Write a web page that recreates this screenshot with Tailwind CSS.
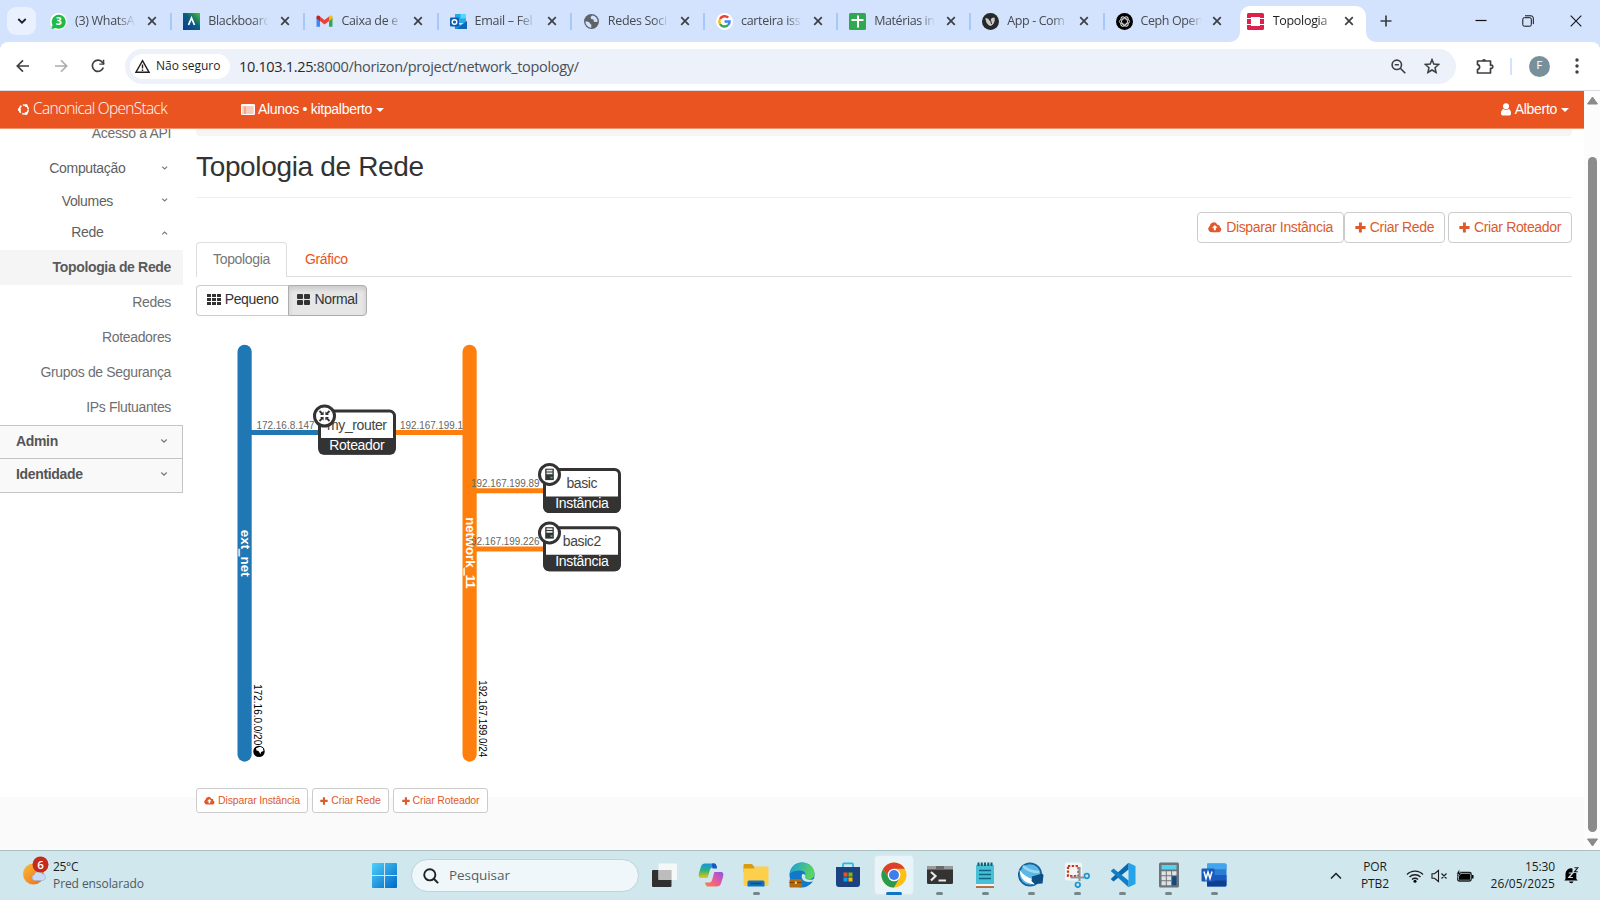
<!DOCTYPE html>
<html lang="pt-BR">
<head>
<meta charset="utf-8">
<title>Topologia de Rede</title>
<script src="https://cdn.jsdelivr.net/npm/@tailwindcss/browser@4"></script>
</head>
<body class="w-[1600px] h-[900px] overflow-hidden bg-white font-['Liberation_Sans',Arial,sans-serif]">
<svg class="hidden">
  <symbol id="x" viewBox="0 0 10 10"><path d="M1.200 1.200l7.600 7.600M8.800 1.200L1.200 8.800" stroke="#3c4043" stroke-width="1.700" fill="none"/></symbol>
  <symbol id="plus" viewBox="0 0 12 12"><path d="M4.300 0.500h3.200v3.800h4v3.200h-4v4H4.300v-4H.4V4.300h3.900z" fill="currentColor"/></symbol>
  <symbol id="cloud" viewBox="0 0 15 12"><path d="M3.600 11.500A3.500 3.500 0 0 1 2 5 4.200 4.200 0 0 1 10 3.500a2.300 2.300 0 0 1 2.600 2.600 2.900 2.900 0 0 1-.6 5.400z" fill="currentColor"/><path d="M7.300 3.800l3 3.100H8.400v2.700H6.200V6.900H4.300z" fill="#fff"/></symbol>
  <symbol id="down" viewBox="0 0 8 6"><path d="M1.300 1.500L4 4.100l2.700-2.600" stroke="#777" stroke-width="1.200" fill="none"/></symbol>
</svg>
<div class="flex h-[900px] w-[1600px] flex-col">

  <!-- Tab strip -->
  <div class="flex h-[42px] shrink-0 bg-[#d3e2fd] font-['Open_Sans','Noto_Sans',sans-serif] text-[12.500px] tracking-[-0.300px] text-[#474b50]">
    <div class="mt-[7px] ml-[7px] flex h-[28px] w-[29px] items-center justify-center rounded-[9px] bg-[#e9f1fe]"><svg class="size-[10px]" viewBox="0 0 10 10"><path d="M1.300 3l3.700 3.700L8.700 3" stroke="#1f1f1f" stroke-width="1.800" fill="none"/></svg></div>
    <div class="ml-[3px] flex h-[42px]">
      <div class="flex w-[133.200px] items-center pl-[11px]">
        <svg class="size-[17px] shrink-0" viewBox="0 0 17 17"><circle cx="8.500" cy="8.500" r="8.500" fill="#fff"/><path d="M1.500 16l1-4a7 7 0 1 1 3 3z" fill="#1fba4a"/><text x="8.500" y="12.200" font-size="10.500" font-weight="700" fill="#fff" text-anchor="middle">3</text></svg>
        <span class="ml-[8px] w-[61px] overflow-hidden whitespace-nowrap [mask-image:linear-gradient(90deg,#000_70%,transparent)]">(3) WhatsA</span>
        <svg class="ml-[11px] size-[10px] shrink-0"><use href="#x"/></svg><i class="ml-auto h-[17px] w-[2px] bg-[#a8c7fa]"></i>
      </div>
      <div class="flex w-[133.200px] items-center pl-[11px]">
        <svg class="size-[17px] shrink-0" viewBox="0 0 17 17"><defs><linearGradient id="bb" x1="0" y1="1" x2="1" y2="0"><stop offset="0" stop-color="#0b3a9a"/><stop offset=".55" stop-color="#08607e"/><stop offset="1" stop-color="#4fc322"/></linearGradient></defs><rect width="17" height="17" fill="url(#bb)"/><path d="M5.500 12L8.500 5l3 7" stroke="#fff" stroke-width="1.800" fill="none"/></svg>
        <span class="ml-[8px] w-[61px] overflow-hidden whitespace-nowrap [mask-image:linear-gradient(90deg,#000_75%,transparent)]">Blackboard</span>
        <svg class="ml-[11px] size-[10px] shrink-0"><use href="#x"/></svg><i class="ml-auto h-[17px] w-[2px] bg-[#a8c7fa]"></i>
      </div>
      <div class="flex w-[133.200px] items-center pl-[11px]">
        <svg class="size-[17px] shrink-0" viewBox="0 0 17 17"><path d="M.5 4v9.800h3.500V7z" fill="#4285f4"/><path d="M13 7v6.800h3.500V4z" fill="#34a853"/><path d="M4 3.500v4.600l4.500 3.400 4.500-3.400V3.500L8.500 7z" fill="#ea4335"/><path d="M.5 5.500V4C.5 2.300 2.600 1.800 4 3.300v4.800z" fill="#c5221f"/><path d="M16.500 5.500V4c0-1.700-2.100-2.200-3.500-.7v4.800z" fill="#fbbc04"/></svg>
        <span class="ml-[8px] w-[61px] overflow-hidden whitespace-nowrap [mask-image:linear-gradient(90deg,#000_75%,transparent)]">Caixa de e</span>
        <svg class="ml-[11px] size-[10px] shrink-0"><use href="#x"/></svg><i class="ml-auto h-[17px] w-[2px] bg-[#a8c7fa]"></i>
      </div>
      <div class="flex w-[133.200px] items-center pl-[11px]">
        <svg class="size-[17px] shrink-0" viewBox="0 0 17 17"><rect x="5" y="1" width="11" height="9" fill="#28a8ea"/><rect x="10.500" y="1" width="5.500" height="4.500" fill="#50d9ff"/><path d="M4 8.500l6.500 3.500L17 8v8H5z" fill="#1490df"/><path d="M17 8L7 16h10z" fill="#0f64b5"/><rect y="4.500" width="9" height="9" rx="1" fill="#0a5fb4"/><circle cx="4.500" cy="9" r="2.300" fill="none" stroke="#fff" stroke-width="1.400"/></svg>
        <span class="ml-[8px] w-[61px] overflow-hidden whitespace-nowrap [mask-image:linear-gradient(90deg,#000_70%,transparent)]">Email – Fel</span>
        <svg class="ml-[11px] size-[10px] shrink-0"><use href="#x"/></svg><i class="ml-auto h-[17px] w-[2px] bg-[#a8c7fa]"></i>
      </div>
      <div class="flex w-[133.200px] items-center pl-[11px]">
        <svg class="size-[17px] shrink-0" viewBox="0 0 17 17"><circle cx="8.500" cy="8.500" r="7.500" fill="#5f6368"/><path d="M2.300 8.500c2 .2 4 0 4.500 1.600s1.500 1 1.500 2.200v2.500a6.500 6.500 0 0 1-6-6.300zM9 2.500L7.500 4.300l.8 1.700 2.300.5.200 2.300 3.700.2A6 6 0 0 0 9 2.500z" fill="#d3e2fd"/></svg>
        <span class="ml-[8px] w-[61px] overflow-hidden whitespace-nowrap [mask-image:linear-gradient(90deg,#000_75%,transparent)]">Redes Soci</span>
        <svg class="ml-[11px] size-[10px] shrink-0"><use href="#x"/></svg><i class="ml-auto h-[17px] w-[2px] bg-[#a8c7fa]"></i>
      </div>
      <div class="flex w-[133.200px] items-center pl-[11px]">
        <svg class="size-[17px] shrink-0" viewBox="0 0 17 17"><circle cx="8.500" cy="8.500" r="8.500" fill="#fff"/><g fill="none" stroke-width="2.400"><path d="M12.200 4.700A5.200 5.200 0 0 0 4 6" stroke="#ea4335"/><path d="M4 6a5.200 5.200 0 0 0 0 5" stroke="#fbbc04"/><path d="M4 11a5.200 5.200 0 0 0 8 1.200" stroke="#34a853"/><path d="M12 12.200a5.200 5.200 0 0 0 1.600-3.700H8.500" stroke="#4285f4"/></g></svg>
        <span class="ml-[8px] w-[61px] overflow-hidden whitespace-nowrap [mask-image:linear-gradient(90deg,#000_75%,transparent)]">carteira iss</span>
        <svg class="ml-[11px] size-[10px] shrink-0"><use href="#x"/></svg><i class="ml-auto h-[17px] w-[2px] bg-[#a8c7fa]"></i>
      </div>
      <div class="flex w-[133.200px] items-center pl-[11px]">
        <svg class="size-[17px] shrink-0" viewBox="0 0 17 17"><rect width="17" height="17" rx="1.500" fill="#2fa84f"/><path d="M9 2.500v12M2.500 7h12" stroke="#fff" stroke-width="2"/></svg>
        <span class="ml-[8px] w-[61px] overflow-hidden tracking-[-0.400px] whitespace-nowrap [mask-image:linear-gradient(90deg,#000_75%,transparent)]">Matérias in</span>
        <svg class="ml-[11px] size-[10px] shrink-0"><use href="#x"/></svg><i class="ml-auto h-[17px] w-[2px] bg-[#a8c7fa]"></i>
      </div>
      <div class="flex w-[133.200px] items-center pl-[11px]">
        <svg class="size-[17px] shrink-0" viewBox="0 0 17 17"><circle cx="8.500" cy="8.500" r="8.500" fill="#26282a"/><path d="M3.500 5c2 0 3.500 1.200 4.300 3.200C8.800 6 9.500 4.500 12.500 4.500c1 4-1 7.500-4 8.500-3-1-5-4-5-8z" fill="#c9c9c9"/><path d="M8 5l1.500 6" stroke="#26282a"/></svg>
        <span class="ml-[8px] w-[61px] overflow-hidden tracking-[-0.400px] whitespace-nowrap [mask-image:linear-gradient(90deg,#000_75%,transparent)]">App - Com</span>
        <svg class="ml-[11px] size-[10px] shrink-0"><use href="#x"/></svg><i class="ml-auto h-[17px] w-[2px] bg-[#a8c7fa]"></i>
      </div>
      <div class="flex w-[133.200px] items-center pl-[11px]">
        <svg class="size-[17px] shrink-0" viewBox="0 0 17 17"><circle cx="8.500" cy="8.500" r="8.500" fill="#000"/><g fill="none" stroke="#ddd" stroke-width=".9"><ellipse cx="8.500" cy="8.500" rx="5.200" ry="2.800"/><ellipse cx="8.500" cy="8.500" rx="5.200" ry="2.800" transform="rotate(60 8.500 8.500)"/><ellipse cx="8.500" cy="8.500" rx="5.200" ry="2.800" transform="rotate(120 8.500 8.500)"/></g></svg>
        <span class="ml-[8px] w-[61px] overflow-hidden tracking-[-0.400px] whitespace-nowrap [mask-image:linear-gradient(90deg,#000_75%,transparent)]">Ceph Open</span>
        <svg class="ml-[10px] size-[10px] shrink-0"><use href="#x"/></svg>
      </div>
    </div>
    <div class="relative mt-[6px] ml-[2px] flex h-[36px] w-[126px] items-center rounded-t-[10px] bg-white pb-[6px] pl-[7px] text-[#1f1f1f]">
      <svg class="absolute bottom-0 -left-[10px] size-[10px]" viewBox="0 0 10 10"><path d="M10 0v10H0A10 10 0 0 0 10 0z" fill="#fff"/></svg>
      <svg class="absolute -right-[10px] bottom-0 size-[10px]" viewBox="0 0 10 10"><path d="M0 0v10h10A10 10 0 0 1 0 0z" fill="#fff"/></svg>
      <svg class="size-[17px] shrink-0" viewBox="0 0 17 17"><path d="M0 5V1.500Q0 0 1.500 0h14Q17 0 17 1.500V5h-4V4H4v1zM0 12v3.500Q0 17 1.500 17h14q1.500 0 1.500-1.500V12h-4v1H4v-1zM0 6h4v5H0zM13 6h4v5h-4z" fill="#e01f4d"/></svg>
      <span class="ml-[9px] w-[59px] overflow-hidden whitespace-nowrap [mask-image:linear-gradient(90deg,#000_75%,rgba(0,0,0,.3))]">Topologia</span>
      <svg class="ml-[12px] size-[10px]"><use href="#x"/></svg>
    </div>
    <div class="flex flex-1 items-center text-[#333]">
      <svg class="ml-[14px] size-[12px]" viewBox="0 0 12 12"><path d="M6 .5v11M.5 6h11" stroke="#3c4043" stroke-width="1.700"/></svg>
      <svg class="ml-[83px] size-[12px]" viewBox="0 0 12 12"><path d="M.5 5.500h11" stroke="#111" stroke-width="1.200"/></svg>
      <svg class="ml-[35px] size-[12px]" viewBox="0 0 12 12"><rect x=".8" y="2.700" width="8.500" height="8.500" rx="1.500" fill="none" stroke="#111"/><path d="M3 .8h6q2.300 0 2.300 2.300v6" fill="none" stroke="#111"/></svg>
      <svg class="ml-[36px] size-[12px]" viewBox="0 0 12 12"><path d="M.7.7l10.600 10.600M11.300.7L.7 11.300" stroke="#111" stroke-width="1.100"/></svg>
    </div>
  </div>

  <!-- Address bar -->
  <div class="h-[49px] shrink-0 bg-[#d3e2fd] font-['Open_Sans','Noto_Sans',sans-serif]">
    <div class="flex h-full items-center rounded-t-[8px] border-b border-[#d9dce0] bg-white">
      <svg class="ml-[16px] size-[14px]" viewBox="0 0 14 14"><path d="M13 7H1.500M7 1.300L1.300 7 7 12.700" stroke="#3c4043" stroke-width="1.700" fill="none"/></svg>
      <svg class="ml-[24px] size-[14px]" viewBox="0 0 14 14"><path d="M1 7h11.500M7 1.300L12.700 7 7 12.700" stroke="#a9abae" stroke-width="1.600" fill="none"/></svg>
      <svg class="ml-[23px] size-[14px]" viewBox="0 0 14 14"><path d="M12.300 8.500A5.600 5.600 0 1 1 11.500 3.500L13 5" stroke="#3c4043" stroke-width="1.700" fill="none"/><path d="M13.300.8v5H8.300V4.500h3.500V.8z" fill="#3c4043"/></svg>
      <div class="ml-[20px] flex h-[35px] w-[1331px] items-center rounded-full bg-[#ecf1fa]">
        <div class="ml-[5px] flex h-[25px] w-[100px] items-center rounded-full bg-white">
          <svg class="ml-[5px] size-[15px]" viewBox="0 0 15 15"><path d="M7.500 1.700L14 13.200H1z" stroke="#1f1f1f" stroke-width="1.400" fill="none"/><path d="M7.500 5.500v4M7.500 10.500v1.400" stroke="#1f1f1f" stroke-width="1.400"/></svg>
          <span class="ml-[6px] text-[12px] font-medium tracking-[0px] whitespace-nowrap text-[#1f1f1f]">Não seguro</span>
        </div>
        <span class="mt-[2px] ml-[9px] w-[350px] text-[14.500px] tracking-[-0.330px] whitespace-nowrap text-[#4a4e53]"><b class="font-normal text-[#26282b]">10.103.1.25:</b>8000/horizon/project/network_topology/</span>
        <svg class="ml-auto size-[15px]" viewBox="0 0 15 15"><circle cx="5.800" cy="5.800" r="4.700" stroke="#3c4043" stroke-width="1.600" fill="none"/><path d="M9.300 9.300l5 5M3.700 5.800h4.200" stroke="#3c4043" stroke-width="1.600"/></svg>
        <svg class="mr-[16px] ml-[18px] size-[16px]" viewBox="0 0 16 16"><path d="M8 1.600l1.800 4.500 4.900.4-3.700 3.200 1.100 4.800L8 12l-4.100 2.500L5 9.700 1.300 6.500l4.900-.4z" stroke="#3c4043" stroke-width="1.500" fill="none"/></svg>
      </div>
      <svg class="ml-[20px] size-[18px]" viewBox="0 0 18 18"><path d="M1.500 4h13v4.200h.7a1.600 1.600 0 0 1 0 3.200h-.7V16h-13v-3.500c2.800-.3 2.800-4.500 0-4.800z" stroke="#3c4043" stroke-width="1.700" fill="none" stroke-linejoin="round"/><path d="M6 4a2 2 0 0 1 4 0z" fill="#3c4043"/></svg>
      <i class="ml-[16px] h-[17px] w-[2px] bg-[#d3e2fd]"></i>
      <div class="ml-[17px] flex size-[21px] items-center justify-center rounded-full bg-[#78909c] font-['Roboto'] text-[11px] text-white">F</div>
      <svg class="ml-[19px] h-[16px] w-[16px]" viewBox="0 0 16 16" fill="#3c4043"><circle cx="8" cy="2" r="1.700"/><circle cx="8" cy="8" r="1.700"/><circle cx="8" cy="14" r="1.700"/></svg>
    </div>
  </div>

  <!-- Page viewport -->
  <div class="flex h-[759px] shrink-0">
    <div class="flex w-[1584px] flex-col">
      <header class="flex h-[38px] shrink-0 items-center border-b border-[#f0936f] bg-[#e95420] text-[14px] tracking-[-0.300px] text-white">
        <svg class="ml-[17px] size-[13px]" viewBox="0 0 12 12"><circle cx="6.300" cy="6" r="4.100" fill="none" stroke="#fff" stroke-width="1.500" stroke-dasharray="7.200 1.390" stroke-dashoffset="-.7"/><g fill="#fff"><circle cx="2.200" cy="6" r="1.400"/><circle cx="8.400" cy="2.300" r="1.400"/><circle cx="8.400" cy="9.700" r="1.400"/></g></svg>
        <span class="ml-[3px] w-[136px] pb-[2px] font-['Open_Sans','Noto_Sans',sans-serif] text-[15.500px] font-light tracking-[-0.700px] whitespace-nowrap">Canonical OpenStack</span>
        <svg class="ml-[72px] h-[11px] w-[14px]" viewBox="0 0 14 11"><rect width="14" height="11" rx="1.300" fill="#fff"/><path d="M1.300 3h11.400M1.300 5h11.400M1.300 7h11.400M1.300 9h11.400M4 2.500v7.500" stroke="#e95420" stroke-width=".6"/></svg>
        <span class="ml-[3px] whitespace-nowrap">Alunos • kitpalberto</span>
        <i class="ml-[4px] border-x-4 border-t-4 border-x-transparent border-t-white"></i>
        <svg class="ml-auto h-[13px] w-[10px]" viewBox="0 0 10 13" fill="#fff"><circle cx="5" cy="3.300" r="3"/><path d="M0 10.500C0 7.500 1.500 6 2.500 6a4 4 0 0 0 5 0C8.500 6 10 7.500 10 10.500c0 1.500-1 2-2 2H2c-1 0-2-.5-2-2z"/></svg>
        <span class="ml-[4px]">Alberto</span>
        <i class="mr-[15px] ml-[4px] border-x-4 border-t-4 border-x-transparent border-t-white"></i>
      </header>
      <div class="flex h-[721px] overflow-hidden bg-[linear-gradient(#fff_668px,#fafafa_668px)] text-[14px] tracking-[-0.340px] text-[#6f6f6f]">
        <nav class="w-[183px] shrink-0">
          <div class="-mt-[12px] flex h-[33px] items-center justify-end pr-[12px]">Acesso à API</div>
          <div class="mt-[2px] flex h-[33px] items-center pr-[15px]"><span class="w-[174px] pl-[14px] text-center text-[#5f5f5f]">Computação</span><svg class="-mt-[2px] h-[6px] w-[8px]"><use href="#down"/></svg></div>
          <div class="flex h-[32px] items-center pr-[15px]"><span class="w-[174px] pl-[14px] text-center text-[#5f5f5f]">Volumes</span><svg class="-mt-[2px] h-[6px] w-[8px]"><use href="#down"/></svg></div>
          <div class="flex h-[33px] items-center pr-[15px] pb-[2px]"><span class="w-[174px] pl-[14px] text-center text-[#5f5f5f]">Rede</span><svg class="h-[6px] w-[8px] rotate-180"><use href="#down"/></svg></div>
          <div class="flex h-[35px] items-center justify-end bg-[#f5f5f5] pr-[12px] pb-px font-bold text-[#5a5a5a]">Topologia de Rede</div>
          <div class="flex h-[35px] items-center justify-end pr-[12px] pb-px">Redes</div>
          <div class="flex h-[35px] items-center justify-end pr-[12px] pb-px">Roteadores</div>
          <div class="flex h-[35px] items-center justify-end pr-[12px] pb-px">Grupos de Segurança</div>
          <div class="flex h-[35px] items-center justify-end pr-[12px] pb-px">IPs Flutuantes</div>
          <div class="border-t border-r border-b border-[#c4c4c4] bg-[#f9f9f9] font-bold text-[#555]">
            <div class="flex h-[33px] items-center justify-between border-b border-[#c4c4c4] pr-[14px] pb-px pl-[16px]">Admin<svg class="-mt-[2px] h-[6px] w-[8px]"><use href="#down"/></svg></div>
            <div class="flex h-[33px] items-center justify-between pr-[14px] pb-[2px] pl-[16px]">Identidade<svg class="-mt-[2px] h-[6px] w-[8px]"><use href="#down"/></svg></div>
          </div>
        </nav>
        <main class="ml-[13px] flex w-[1376px] flex-col">
          <div class="h-[7px] shrink-0 rounded-b bg-[#f5f5f5]"></div>
          <h1 class="flex h-[62px] shrink-0 items-center border-b border-[#eee] text-[28px] tracking-[-0.340px] text-[#333]">Topologia de Rede</h1>
          <div class="mt-[14px] flex h-[31px] shrink-0 justify-end text-[#dd5a2c]">
            <div class="flex w-[147px] items-center justify-center gap-[4px] rounded-[4px] border border-[#ccc] bg-white pb-px whitespace-nowrap"><svg class="h-[12px] w-[14px]"><use href="#cloud"/></svg>Disparar Instância</div>
            <div class="flex w-[101px] items-center justify-center gap-[4px] rounded-[4px] border border-[#ccc] bg-white pb-px whitespace-nowrap"><svg class="size-[11px]"><use href="#plus"/></svg>Criar Rede</div>
            <div class="ml-[3px] flex w-[124px] items-center justify-center gap-[4px] rounded-[4px] border border-[#ccc] bg-white pb-px whitespace-nowrap"><svg class="size-[11px]"><use href="#plus"/></svg>Criar Roteador</div>
          </div>
          <div class="-mt-px flex h-[35px] shrink-0 items-stretch border-b border-[#ddd]">
            <div class="-mb-px flex w-[91px] items-center justify-center rounded-t-[4px] border border-b-0 border-[#ddd] bg-white pb-[2px] text-[#777]">Topologia</div>
            <div class="ml-[18px] flex items-center text-[#e95420]">Gráfico</div>
          </div>
          <div class="mt-[8px] flex h-[31px] shrink-0 text-[#333]">
            <div class="flex w-[92px] items-center justify-center gap-[4px] rounded-l-[4px] border border-r-0 border-[#ccc] bg-white pb-[2px]"><svg class="h-[11px] w-[14px]" viewBox="0 0 14 11" fill="#333"><path d="M0 0h4v3H0zM5 0h4v3H5zM10 0h4v3h-4zM0 4h4v3H0zM5 4h4v3H5zM10 4h4v3h-4zM0 8h4v3H0zM5 8h4v3H5zM10 8h4v3h-4z"/></svg>Pequeno</div>
            <div class="flex w-[79px] items-center justify-center gap-[4px] rounded-r-[4px] border border-[#adadad] bg-[#e6e6e6] pb-[2px] shadow-[inset_0_3px_5px_rgba(0,0,0,.125)]"><svg class="h-[11px] w-[13px]" viewBox="0 0 13 11" fill="#333"><rect width="6" height="5" rx="1"/><rect x="7" width="6" height="5" rx="1"/><rect y="6" width="6" height="5" rx="1"/><rect x="7" y="6" width="6" height="5" rx="1"/></svg>Normal</div>
          </div>
          <svg class="h-[471px] w-[1376px] shrink-0 tracking-normal" viewBox="196 316.300 1376 471">
            <g stroke-width="5"><path d="M250 432.700h70" stroke="#1f77b4"/><path d="M395 432.700h70M475 491h70M475 549.300h70" stroke="#ff7f0e"/></g>
            <rect x="237.500" y="345" width="14.200" height="417" rx="7.100" fill="#1f77b4"/>
            <rect x="462.500" y="345" width="14.200" height="417" rx="7.100" fill="#ff7f0e"/>
            <g font-size="10.500" fill="#666" lengthAdjust="spacingAndGlyphs">
              <text x="256.500" y="429" textLength="58" lengthAdjust="spacingAndGlyphs">172.16.8.147</text>
              <text x="400" y="429" textLength="63" lengthAdjust="spacingAndGlyphs">192.167.199.1</text>
              <text x="471" y="487.500" textLength="68.500" lengthAdjust="spacingAndGlyphs">192.167.199.89</text>
              <text x="465.500" y="545.700" textLength="74" lengthAdjust="spacingAndGlyphs">192.167.199.226</text>
            </g>
            <g font-size="13.300" font-weight="700" fill="#fff">
              <text transform="translate(241 530) rotate(90)" textLength="47">ext_net</text>
              <text transform="translate(466 517.500) rotate(90)" textLength="71.500">network_11</text>
            </g>
            <path d="M239 549v7.500M464 568.500v7.500" stroke="#fff" stroke-width="1.200"/>
            <g font-size="10.500" fill="#000">
              <text transform="translate(254.300 684.500) rotate(90)" textLength="61" lengthAdjust="spacingAndGlyphs">172.16.0.0/20</text>
              <text transform="translate(479.200 680.500) rotate(90)" textLength="77" lengthAdjust="spacingAndGlyphs">192.167.199.0/24</text>
            </g>
            <circle cx="259" cy="751.700" r="5.700" fill="#000"/><path d="M256 748.500l4-1.500 2.800 1.200.7 3-2.500 1-.5 2.300-2-3.200-2-.6z" fill="#fff"/>
            <g font-size="14" text-anchor="middle">
              <g fill="#fff" stroke="#333" stroke-width="3"><rect x="319.500" y="411.300" width="75" height="42" rx="5"/><rect x="544.500" y="469.700" width="75" height="42" rx="5"/><rect x="544.500" y="528" width="75" height="42" rx="5"/></g>
              <g fill="#333"><path d="M318.500 438.300h77V450a5 5 0 0 1-5 5h-67a5 5 0 0 1-5-5z"/><path d="M543.500 496.700h77v11.500a5 5 0 0 1-5 5h-67a5 5 0 0 1-5-5z"/><path d="M543.500 555h77v11.500a5 5 0 0 1-5 5h-67a5 5 0 0 1-5-5z"/></g>
              <g fill="#444"><text x="357" y="430" textLength="60">my_router</text><text x="582" y="488.300" textLength="31">basic</text><text x="582" y="546.500" textLength="38.500">basic2</text></g>
              <g fill="#fff"><text x="357" y="450" textLength="55.500">Roteador</text><text x="582" y="508.300" textLength="53.500">Instância</text><text x="582" y="566.500" textLength="53.500">Instância</text></g>
            </g>
            <g fill="#fff" stroke="#333" stroke-width="3"><circle cx="324.500" cy="416.300" r="10"/><circle cx="549.500" cy="474.700" r="10"/><circle cx="549.500" cy="533.200" r="10"/></g>
            <path d="M319.500 411.300l3 3M329.500 411.300l-3 3M319.500 421.300l3-3M329.500 421.300l-3-3" stroke="#333" stroke-width="1.800"/>
            <path d="M323.600 411.800v3.600h-3.600zM325.400 411.800v3.600h3.600zM323.600 420.800v-3.600h-3.600zM325.400 420.800v-3.600h3.600z" fill="#333"/>
            <g id="srv"><rect x="545.200" y="469" width="8.600" height="11.400" fill="#333"/><path d="M546.500 470h6v1.900h-6zM546.500 472.700h6v1.900h-6z" fill="#e5e5e5"/><rect x="550.500" y="477" width="2" height="1.700" fill="#58b368"/></g>
            <use href="#srv" y="58.500"/>
          </svg>
          <div class="mt-px flex h-[25px] shrink-0 text-[10.500px] tracking-[-0.150px] text-[#dd5a2c]">
            <div class="flex w-[112px] items-center justify-center gap-[3px] rounded-[3px] border border-[#ccc] bg-white whitespace-nowrap"><svg class="h-[9px] w-[11px]"><use href="#cloud"/></svg>Disparar Instância</div>
            <div class="ml-[4px] flex w-[77px] items-center justify-center gap-[3px] rounded-[3px] border border-[#ccc] bg-white whitespace-nowrap"><svg class="size-[8px]"><use href="#plus"/></svg>Criar Rede</div>
            <div class="ml-[4px] flex w-[95px] items-center justify-center gap-[3px] rounded-[3px] border border-[#ccc] bg-white whitespace-nowrap"><svg class="size-[8px]"><use href="#plus"/></svg>Criar Roteador</div>
          </div>
        </main>
      </div>
    </div>
    <div class="flex w-[16px] flex-col items-center bg-[#fcfcfc]">
      <svg class="mt-[5px] h-[9px] w-[11px]" viewBox="0 0 11 9"><path d="M5.500 1L10.500 8h-10z" fill="#8a8a8a" stroke="#8a8a8a" stroke-linejoin="round"/></svg>
      <div class="mt-[52px] h-[675px] w-[9px] rounded-full bg-[#8b8b8b]"></div>
      <svg class="mt-[6px] h-[9px] w-[11px]" viewBox="0 0 11 9"><path d="M5.500 8L.5 1h10z" fill="#8a8a8a" stroke="#8a8a8a" stroke-linejoin="round"/></svg>
    </div>
  </div>

  <!-- Taskbar -->
  <div class="flex h-[50px] shrink-0 border-t border-[#a9bfc0] bg-[#d0e7ee] font-['Open_Sans','Noto_Sans',sans-serif] text-[12px] leading-[17px] tracking-[-0.080px] text-[#1c1c1c]">
    <svg class="mt-[4px] ml-[22px] h-[32px] w-[28px]" viewBox="22 855 28 32"><defs><linearGradient id="sun" x1="0" y1="0" x2="1" y2="1"><stop offset="0" stop-color="#f8bd35"/><stop offset="1" stop-color="#ee6a17"/></linearGradient></defs><circle cx="33.500" cy="874" r="10.500" fill="url(#sun)"/><path d="M34.500 880.500a3 3 0 0 1-.3-5.800 4.500 4.500 0 0 1 8.300-.7 3.300 3.300 0 0 1 .5 6.500z" fill="#c8daf8" stroke="#93aee0" stroke-width=".6"/><circle cx="40.500" cy="864.500" r="8" fill="#c42b1c"/><text x="40.500" y="868.800" text-anchor="middle" font-size="11.500" font-weight="600" fill="#fff">6</text></svg>
    <div class="mt-[7px] ml-[3px] w-[319px]"><p class="tracking-[-0.300px]">25°C</p><p class="text-[#4c5a5e]">Pred ensolarado</p></div>
    <svg class="mt-[12px] size-[25px] shrink-0" viewBox="0 0 25 25"><defs><linearGradient id="win" x1="0" y1="0" x2="1" y2="1"><stop offset="0" stop-color="#4fd0fb"/><stop offset="1" stop-color="#0067c8"/></linearGradient></defs><path d="M0 1q0-1 1-1h11v12H0zM13 0h11q1 0 1 1v11H13zM0 13h12v12H1q-1 0-1-1zM13 13h12v11q0 1-1 1H13z" fill="url(#win)"/></svg>
    <div class="mt-[8px] ml-[14px] flex h-[33px] w-[228px] items-center rounded-full border border-[#bdd3da] bg-[#f0f7fa]">
      <svg class="ml-[11px] size-[16px]" viewBox="0 0 16 16"><circle cx="6.800" cy="6.800" r="5.600" stroke="#222" stroke-width="1.900" fill="none"/><path d="M10.800 10.800l4.300 4.300" stroke="#222" stroke-width="2"/></svg>
      <span class="ml-[10px] text-[13.500px] tracking-[-0.080px] text-[#555f63]">Pesquisar</span>
    </div>
    <div class="ml-[3px] flex">
      <div class="flex w-[45.800px] justify-center pt-[11px]"><svg class="size-[26px]" viewBox="0 0 26 26"><rect y="8" width="19.500" height="17" rx="1" fill="#303030"/><rect x="6.500" y="1.500" width="18.500" height="16.500" rx="1" fill="#fafafa" opacity=".85"/><rect x="6.500" y="8" width="13" height="10" fill="#bdbdbd"/></svg></div>
      <div class="flex w-[45.800px] justify-center pt-[11px]"><svg class="size-[26px]" viewBox="0 0 26 26"><defs><linearGradient id="c1" x1="0" y1="0" x2="0" y2="1"><stop offset="0" stop-color="#1594e8"/><stop offset=".5" stop-color="#35b46f"/><stop offset="1" stop-color="#f3c414"/></linearGradient><linearGradient id="c2" x1="1" y1="0" x2="0" y2="1"><stop offset="0" stop-color="#8a54e8"/><stop offset=".5" stop-color="#ea5a9b"/><stop offset="1" stop-color="#f7863b"/></linearGradient></defs><path d="M7 1.500h9c2 0 2.500 2 3 4h-4c-2.500 0-3 2-3.700 4.500L9.700 16H3C.5 16 .3 13.500 1 11l2-6.500c.7-2 2-3 4-3z" fill="url(#c1)"/><path d="M14 1.500h2c2 0 2.500 2 3 5h-4.500z" fill="#1f4fc8"/><path d="M19 24.500h-9c-2 0-2.500-2-3-4h4c2.500 0 3-2 3.700-4.500l1.600-6H23c2.500 0 2.700 2.500 2 5l-2 6.500c-.7 2-2 3-4 3z" fill="url(#c2)"/></svg></div>
      <div class="flex w-[45.800px] flex-col items-center pt-[11px]"><svg class="size-[26px]" viewBox="0 0 26 26"><path d="M.5 3q0-1 1-1H9l2.500 3H20v5H.5z" fill="#d79c13"/><path d="M.5 6.500h10l2-2h13V24H.5z" fill="#fcd04b"/><path d="M4.500 24.500V20q0-1.500 1.500-1.500h14q1.500 0 1.500 1.500v4.500z" fill="#1273bd"/><rect x="7.500" y="20.700" width="11" height="1.600" fill="#0a4d8a"/></svg><i class="mt-[4px] h-[3px] w-[7px] rounded-full bg-[#768589]"></i></div>
      <div class="flex w-[45.800px] justify-center pt-[11px]"><svg class="size-[26px]" viewBox="0 0 26 26"><defs><linearGradient id="e1" x1="0" y1="0" x2="1" y2=".3"><stop offset="0" stop-color="#1b9de2"/><stop offset="1" stop-color="#5bd55c"/></linearGradient></defs><circle cx="13" cy="13" r="12.500" fill="#1279c9"/><path d="M.7 12C2 4 7 .5 13 .5c7.500 0 12.500 5 12.500 11 0 4-3 6-6.500 6-3 0-5-1.500-3-3.500 1.500-2.500-1-5.500-5-5.500C7 8.500 3 9 .7 12z" fill="url(#e1)"/><path d="M13 12.500c-1.500 5.500 3 9 11.500 6.700l1.500-3c-2 1.500-4 1.800-6 1.500-3-.3-5-1.500-3.500-3.700-.5-1.500-2-2.500-3.500-1.500z" fill="#d0e7ee"/><rect x=".5" y="17" width="12.500" height="8.500" rx="1" fill="#b5690f"/><path d="M.5 20.500h12.500" stroke="#7b4205"/><rect x="5.800" y="19.500" width="2" height="2.500" fill="#ffd25e"/></svg></div>
      <div class="flex w-[45.800px] justify-center pt-[11px]"><svg class="size-[26px]" viewBox="0 0 26 26"><path d="M8 5.500V2.300q0-1 1-1h8q1 0 1 1v3.200" fill="none" stroke="#29b4ea" stroke-width="1.700"/><path d="M1 5h24v17q0 3-3 3H4q-3 0-3-3z" fill="#1c437f"/><path d="M8.500 10.500h4v4h-4z" fill="#f25022"/><path d="M13.500 10.500h4v4h-4z" fill="#7fba00"/><path d="M8.500 15.500h4v4h-4z" fill="#00a4ef"/><path d="M13.500 15.500h4v4h-4z" fill="#ffb900"/></svg></div>
      <div class="flex w-[45.800px] justify-center pt-[4px]"><div class="flex h-[40px] w-[40px] flex-col items-center rounded-[4px] border border-[#dbe8ec] bg-[#e9f4f8] pt-[6px]"><svg class="size-[26px] shrink-0" viewBox="0 0 26 26"><circle cx="13" cy="13" r="12.500" fill="#fbc116"/><path d="M2.200 6.700A12.500 12.500 0 0 1 23.800 6.750H13L7.600 16.100z" fill="#dc3e30"/><path d="M2.200 6.700A12.500 12.500 0 0 0 13 25.500l5.400-9.400H7.600z" fill="#2a9a4c"/><circle cx="13" cy="13" r="6.300" fill="#fff"/><circle cx="13" cy="13" r="5" fill="#3f7ded"/></svg><i class="mt-[4px] h-[3px] w-[16px] shrink-0 rounded-full bg-[#1374c5]"></i></div></div>
      <div class="flex w-[45.800px] flex-col items-center pt-[11px]"><svg class="size-[26px]" viewBox="0 0 26 26"><rect y="4" width="26" height="18" rx="1.500" fill="#333"/><path d="M0 7.500v-2Q0 4 1.500 4h23Q26 4 26 5.500v2z" fill="#9a9a9a"/><path d="M9 4h8v3.500H9z" fill="#6a6a6a"/><path d="M4 10l4.500 4L4 18.500M11.500 18.500H19" stroke="#e8e8e8" stroke-width="2.200" fill="none"/></svg><i class="mt-[4px] h-[3px] w-[7px] rounded-full bg-[#768589]"></i></div>
      <div class="flex w-[45.800px] flex-col items-center pt-[11px]"><svg class="size-[26px]" viewBox="0 0 26 26"><rect x="4" y="2.500" width="18" height="21" rx="1.500" fill="#49bfd7"/><path d="M4 22h18v3H4z" fill="#f4f4f4"/><path d="M4 25h18" stroke="#a5470f" stroke-width="1.500"/><path d="M7 8.500h12M7 12.500h12M7 16.500h12" stroke="#0d6780" stroke-width="1.400"/><path d="M6.500.5v3.500M9.800.5v3.500M13 .5v3.500M16.300.5v3.500M19.500.5v3.500" stroke="#145c70" stroke-width="2"/></svg><i class="mt-[4px] h-[3px] w-[7px] rounded-full bg-[#768589]"></i></div>
      <div class="flex w-[45.800px] flex-col items-center pt-[11px]"><svg class="size-[26px]" viewBox="0 0 26 26"><circle cx="12" cy="12.500" r="11.200" fill="#5bb7e6" stroke="#15639c" stroke-width="1.700"/><path d="M1.500 8C6 14 12 17 20 18l-4 4.500C8 21 2.500 18 1.500 8z" fill="#fff"/><path d="M5 4c4 4 9 6 16 6" stroke="#9ad7f3" stroke-width="2.500" fill="none"/><path d="M14 14.500l10-3 1.500 1.500-1 8.500-8 .5-3-3z" fill="#0c4f84"/></svg><i class="mt-[4px] h-[3px] w-[7px] rounded-full bg-[#768589]"></i></div>
      <div class="flex w-[45.800px] flex-col items-center pt-[11px]"><svg class="size-[26px]" viewBox="0 0 26 26"><rect x="1" y=".5" width="17" height="18" rx="2" fill="#f4f4f4"/><rect x="4" y="4" width="10.500" height="10" fill="none" stroke="#c1381b" stroke-width="2.200" stroke-dasharray="2.300 1.500"/><path d="M15.500 5v14M6.500 15.500H20" stroke="#8c969b" stroke-width="2.200"/><circle cx="22.800" cy="14" r="2.300" fill="none" stroke="#1e94d0" stroke-width="1.700"/><circle cx="13.800" cy="22.800" r="2.300" fill="none" stroke="#1e94d0" stroke-width="1.700"/></svg><i class="mt-[4px] h-[3px] w-[7px] rounded-full bg-[#768589]"></i></div>
      <div class="flex w-[45.800px] flex-col items-center pt-[11px]"><svg class="size-[26px]" viewBox="0 0 26 26"><path d="M18.500.7L25.500 4v18l-7 3.300z" fill="#25a4ea"/><path d="M18.500.7v6.800L3.500 19.500.7 17z" fill="#0868ad"/><path d="M.7 9L3.500 6.500l15 12v6.800z" fill="#0f7fca"/></svg><i class="mt-[4px] h-[3px] w-[7px] rounded-full bg-[#768589]"></i></div>
      <div class="flex w-[45.800px] flex-col items-center pt-[11px]"><svg class="size-[26px]" viewBox="0 0 26 26"><rect x="3" y=".5" width="20" height="25" rx="1.500" fill="#6e7479"/><rect x="5.500" y="3" width="15" height="4.500" fill="#53d3ee"/><path d="M5.500 9.300h4.300v4H5.500zM10.800 9.300h4.300v4h-4.300zM16.100 9.300h4.400v4h-4.400zM5.500 14.300h4.300v4H5.500zM10.800 14.300h4.300v4h-4.300zM5.500 19.300h4.300v4H5.500zM10.800 19.300h4.300v4h-4.300z" fill="#dfe2e5"/><path d="M16.100 14.300h4.400v9h-4.400z" fill="#114a80"/></svg><i class="mt-[4px] h-[3px] w-[7px] rounded-full bg-[#768589]"></i></div>
      <div class="flex w-[45.800px] flex-col items-center pt-[11px]"><svg class="size-[26px]" viewBox="0 0 26 26"><rect x="6" y="1.500" width="19.500" height="23" rx="1.500" fill="#2b7cd3"/><path d="M6 1.500h18q1.500 0 1.500 1.500v4.300H6z" fill="#41a5ee"/><path d="M6 13h19.500v6H6z" fill="#185abd"/><path d="M6 18.500h19.500V23q0 1.500-1.500 1.500H6z" fill="#103f91"/><rect x=".5" y="6.500" width="13" height="13" rx="1" fill="#185abd"/><path d="M3 9.500l2 7 2-6.500 2 6.500 2-7" fill="none" stroke="#fff" stroke-width="1.500"/></svg><i class="mt-[4px] h-[3px] w-[7px] rounded-full bg-[#768589]"></i></div>
    </div>
    <div class="ml-auto flex h-[49px] items-center pr-[21px]">
      <svg class="size-[12px]" viewBox="0 0 12 12"><path d="M1 8.500l5-5 5 5" stroke="#1c1c1c" stroke-width="1.500" fill="none"/></svg>
      <div class="-mt-px ml-[16px] w-[34px] text-center"><p>POR</p><p>PTB2</p></div>
      <svg class="ml-[14px] h-[14px] w-[18px]" viewBox="0 0 18 14"><g fill="none" stroke="#1c1c1c" stroke-width="1.300"><path d="M1 5.500a11.300 11.300 0 0 1 16 0M3.500 8a7.800 7.800 0 0 1 11 0M6 10.500a4.200 4.200 0 0 1 6 0"/></g><circle cx="9" cy="12.300" r="1.500"/></svg>
      <svg class="ml-[7px] h-[14px] w-[17px]" viewBox="0 0 17 14"><path d="M1 4.700h2.500L7.500 1.500v11L3.500 9.300H1zM10.500 4.500l5 5M15.500 4.500l-5 5" fill="none" stroke="#1c1c1c" stroke-width="1.100"/></svg>
      <svg class="ml-[8px] h-[14px] w-[18px]" viewBox="0 0 18 14"><rect x="1.700" y="3.500" width="13.500" height="8.500" rx="1.800" fill="none" stroke="#1c1c1c" stroke-width="1.300"/><rect x="3" y="4.800" width="11" height="6"/><path d="M16 6h1.500v3.500H16z"/><path d="M3.500 0L.5 5h2L1.800 8.500 5.500 4h-2z" stroke="#d0e7ee" stroke-width=".5"/></svg>
      <div class="-mt-[2px] ml-[11px] w-[70px] text-right tracking-[0.080px] whitespace-nowrap"><p class="tracking-[-0.100px]">15:30</p><p>26/05/2025</p></div>
      <svg class="ml-[9px] h-[17px] w-[15px]" viewBox="0 0 15 17"><path d="M1.500 12V7a5.500 5.500 0 0 1 7-5.500V6h3.800v6l1.500 1.500H.3zM5 14.500h4.500a2.300 2.300 0 0 1-4.500 0z"/><path d="M10.500.8h3.300l-3.300 4h3.300" stroke="#1c1c1c" stroke-width="1.100" fill="none"/><path d="M4.800 6h4l-4 4.500h4" stroke="#d0e7ee" stroke-width="1.200" fill="none"/></svg>
    </div>
  </div>
</div>
</body>
</html>
